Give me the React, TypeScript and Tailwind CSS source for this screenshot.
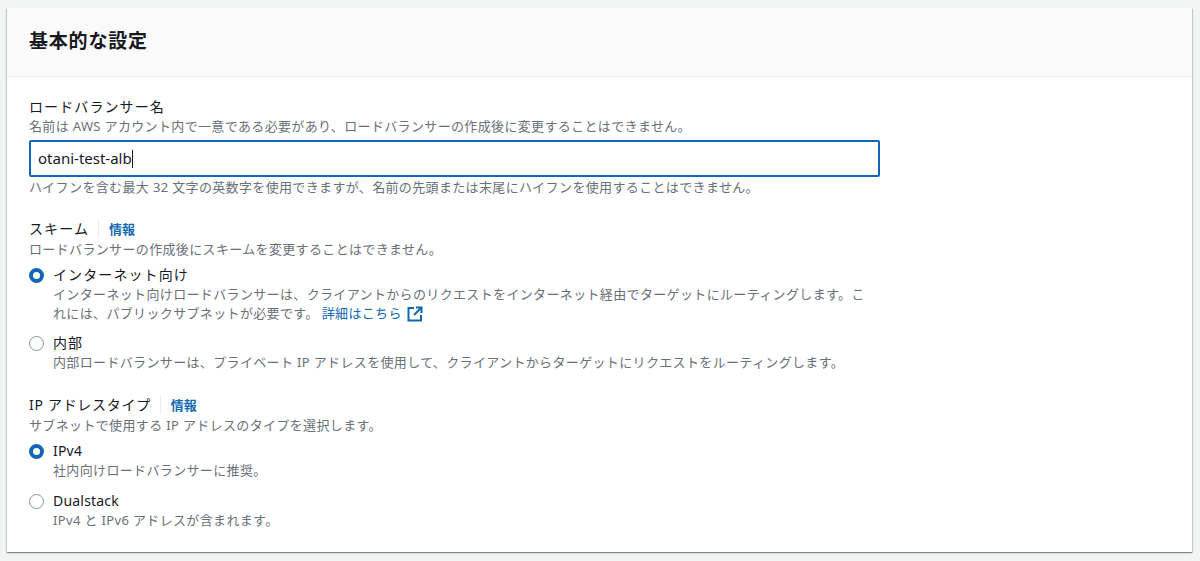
const font = { fontFamily: '"Noto Sans", "Noto Sans CJK JP", sans-serif' };

function Desc({ children, className = '' }: { children: React.ReactNode; className?: string }) {
  return <div className={`text-[13px] leading-[19px] text-[#687078] tracking-[0.35px] ${className}`}>{children}</div>;
}

function InfoLabel({ label, className = 'tracking-[1.1px]' }: { label: string; className?: string }) {
  return (
    <div className="flex items-center h-[20px]">
      <span className={`text-[14px] leading-[20px] text-[#16191f] ${className}`}>{label}</span>
      <span className="ml-[9px] mr-[10px] w-px h-[18px] bg-[#eaeded]" />
      <a className="text-[13px] leading-[20px] font-bold text-[#0f68b0]">情報</a>
    </div>
  );
}

function Radio({ checked, title, latin, children }: { checked?: boolean; title: string; latin?: boolean; children: React.ReactNode }) {
  return (
    <div className="flex">
      <div className="w-[24px] pt-[3px] shrink-0">
        {checked ? (
          <div className="w-[15px] h-[15px] rounded-full border-[4px] border-[#1166bb] bg-white" />
        ) : (
          <div className="w-[15px] h-[15px] rounded-full border border-[#879596] bg-white" />
        )}
      </div>
      <div>
        <div className={`text-[14px] leading-[20px] text-[#16191f] ${latin ? 'tracking-[0.2px]' : 'tracking-[1.1px]'}`}>{title}</div>
        <Desc>{children}</Desc>
      </div>
    </div>
  );
}

export default function App() {
  return (
    <div className="h-[561px] w-[1200px] overflow-hidden bg-[#f2f3f3] pt-[8px] pl-[7px] pr-[8px]" style={font}>
      <div className="h-[544px] bg-white shadow-[0_1px_1px_0_rgba(0,28,36,0.3),1px_1px_1px_0_rgba(0,28,36,0.15),-1px_1px_1px_0_rgba(0,28,36,0.15)]">
        {/* Header */}
        <div className="h-[69px] bg-[#fafafa] border-b border-[#eaeded] pl-[22px] pt-[20px]">
          <h2 className="text-[19px] leading-[26px] font-bold text-[#16191f] tracking-[0.8px]">基本的な設定</h2>
        </div>

        <div className="pl-[22px] pt-[20px]">
          {/* Load balancer name */}
          <div className="text-[14px] leading-[20px] text-[#16191f] tracking-[1.1px]">ロードバランサー名</div>
          <Desc>名前は AWS アカウント内で一意である必要があり、ロードバランサーの作成後に変更することはできません。</Desc>
          <div className="mt-[4px] w-[851px] h-[37px] rounded-[2px] border-2 border-[#1166bb] pl-[7px] flex items-center text-[15px] text-[#16191f]">
            otani-test-alb<span className="w-px h-[18px] bg-[#16191f]" />
          </div>
          <Desc className="mt-[1px]">
            ハイフンを含む最大 32 文字の英数字を使用できますが、名前の先頭または末尾にハイフンを使用することはできません。
          </Desc>

          {/* Scheme */}
          <div className="mt-[22px]">
            <InfoLabel label="スキーム" />
            <Desc className="mt-[1px]">ロードバランサーの作成後にスキームを変更することはできません。</Desc>
            <div className="mt-[6px] flex flex-col gap-[10px]">
              <Radio checked title="インターネット向け">
                インターネット向けロードバランサーは、クライアントからのリクエストをインターネット経由でターゲットにルーティングします。こ
                <br />
                れには、パブリックサブネットが必要です。
                <a className="ml-[3px] inline-flex items-center text-[#0f68b0]">
                  詳細はこちら
                  <svg className="ml-[5px]" width="16" height="16" viewBox="0 0 16 16" fill="none" stroke="#0f68b0" strokeWidth="2">
                    <path d="M7 2H1.5v12.5H14V9" />
                    <path d="M9 1.5h5.5V7" />
                    <path d="M14 2 7 9" />
                  </svg>
                </a>
              </Radio>
              <Radio title="内部">
                内部ロードバランサーは、プライベート IP アドレスを使用して、クライアントからターゲットにリクエストをルーティングします。
              </Radio>
            </div>
          </div>

          {/* IP address type */}
          <div className="mt-[23px]">
            <InfoLabel label="IP アドレスタイプ" className="tracking-[0.7px]" />
            <Desc className="mt-[1px]">サブネットで使用する IP アドレスのタイプを選択します。</Desc>
            <div className="mt-[6px] flex flex-col gap-[11px]">
              <Radio checked latin title="IPv4">社内向けロードバランサーに推奨。</Radio>
              <Radio latin title="Dualstack">IPv4 と IPv6 アドレスが含まれます。</Radio>
            </div>
          </div>
        </div>
      </div>
    </div>
  );
}
